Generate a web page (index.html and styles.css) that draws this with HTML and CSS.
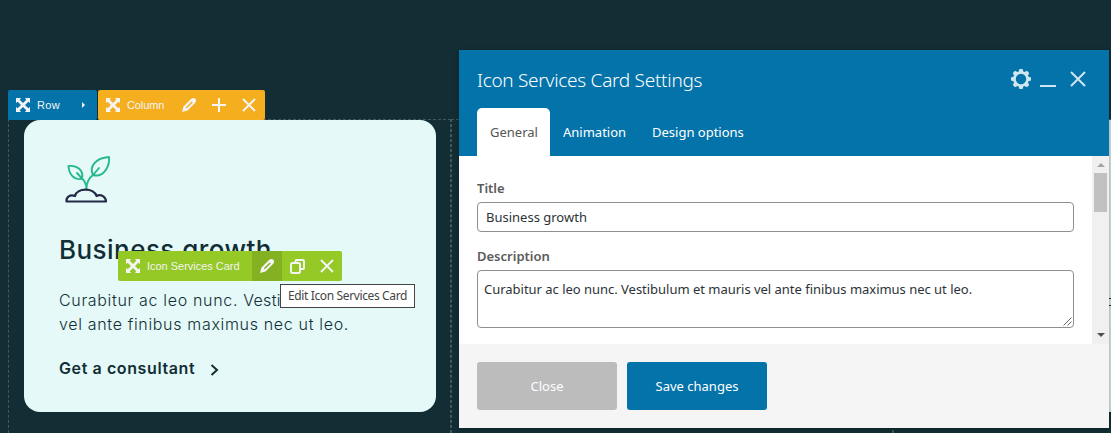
FILE: index.html
```
<!DOCTYPE html>
<html lang="en">
<head>
<meta charset="utf-8">
<title>Icon Services Card Settings</title>
<link rel="stylesheet" href="styles.css">
</head>
<body>
<svg class="sprite" width="0" height="0">
  <symbol id="move" viewBox="0 0 14 14"><path d="M0 0h5L3.700 1.700 7 5l3.300-3.300L9 0h5v5l-1.700-1.300L9 7l3.300 3.300L14 9v5H9l1.300-1.700L7 9l-3.300 3.300L5 14H0V9l1.700 1.300L5 7 1.700 3.700 0 5z"/></symbol>
  <symbol id="pencil" viewBox="0 0 14 14"><path fill-rule="evenodd" d="M0 14l1.500-5.500L9 1q3-2 4.500 0T13 5l-7.500 7.500zM3.800 9.300l1 1L10.700 4.400l-1-1z"/></symbol>
  <symbol id="cross" viewBox="0 0 14 14"><path class="line" d="M1 1l12 12M13 1L1 13"/></symbol>
  <symbol id="plus" viewBox="0 0 14 14"><path class="line" d="M7 0v14M0 7h14"/></symbol>
  <symbol id="copy" viewBox="0 0 15 15"><path class="line" d="M5.500 3V2q0-1 1-1h6.500q1 0 1 1v7q0 1-1 1h-2"/><rect class="line" x="1" y="4" width="9" height="10" rx="1.500"/></symbol>
</svg>

<main class="page">
  <section class="column">
    <article class="card">
      <svg class="plant" viewBox="0 0 48 50">
        <g class="leaf">
          <path d="M23.500 34C23.500 28 25 23.500 30 20M23.500 34C23.500 29 22 26 18.500 23"/>
          <path d="M30 20C26 12 32 3 46 2C47 12 40 23 30 20ZM30 20L36 13"/>
          <path d="M19 23.500C12 26 6 20 5.500 11C14 10 21 15 19 23.500ZM19 23.500L14 18"/>
        </g>
        <path class="soil" d="M3.500 46.500C3 42 7 39 12 41C14 32.500 31 32.500 33.500 41C38 38.500 43 42 43 46.500Z"/>
      </svg>
      <h2>Business growth</h2>
      <p>Curabitur ac leo nunc. <span class="tight">Vestibulum et mauris</span><br>vel ante finibus maximus nec ut leo.</p>
      <a class="more">Get a consultant<svg viewBox="0 0 9 14"><path d="M1.500 2L7 7l-5.500 5"/></svg></a>
    </article>
  </section>
  <section class="column"></section>
  <section class="column last"><article class="card"><i class="mark"></i></article></section>
</main>

<nav class="controls top">
  <div class="group row"><svg><use href="#move"/></svg><span>Row</span><i class="caret"></i></div>
  <div class="group col"><svg><use href="#move"/></svg><span>Column</span><b><svg><use href="#pencil"/></svg></b><b><svg><use href="#plus"/></svg></b><b><svg><use href="#cross"/></svg></b></div>
</nav>
<nav class="controls element">
  <div class="group green"><svg><use href="#move"/></svg><span>Icon Services Card</span><b class="active"><svg><use href="#pencil"/></svg></b><b><svg class="copy"><use href="#copy"/></svg></b><b><svg><use href="#cross"/></svg></b></div>
</nav>
<div class="tooltip">Edit Icon Services Card</div>

<div class="modal">
  <header>
    <div class="bar">
      <h1>Icon Services Card Settings</h1>
      <svg class="gear" viewBox="0 0 20 20"><path fill-rule="evenodd" d="M8.400 0h3.200l.7 2.500 1.200.5L16 1.800 18.200 4 17 6.500l.5 1.200L20 8.400v3.200l-2.500.7-.5 1.200 1.200 2.500-2.200 2.200-2.500-1.200-1.200.5-.7 2.500H8.400l-.7-2.500-1.200-.5L4 18.200 1.800 16 3 13.500l-.5-1.200L0 11.600V8.400l2.500-.7L3 6.500 1.800 4 4 1.800 6.500 3l1.200-.5zM10 4.800a5.200 5.200 0 1 0 0 10.400a5.200 5.200 0 1 0 0-10.400z"/></svg>
      <i class="minimize"></i>
      <svg class="close" viewBox="0 0 16 16"><path d="M1 1l14 14M15 1L1 15"/></svg>
    </div>
    <div class="tabs"><span class="tab current">General</span><span class="tab animation">Animation</span><span class="tab design">Design options</span></div>
  </header>
  <div class="body">
    <div class="fields">
      <label>Title</label>
      <div class="input"><span>Business growth</span></div>
      <label class="second">Description</label>
      <div class="input area"><span>Curabitur ac leo nunc. Vestibulum et mauris vel ante finibus maximus nec ut leo.</span><svg viewBox="0 0 9 9"><path d="M.5 8.500l8-8M4.500 8.500l4-4"/></svg></div>
    </div>
    <div class="scrollbar"><i class="up"></i><i class="thumb"></i><i class="down"></i></div>
  </div>
  <footer><span class="button muted">Close</span><span class="button">Save changes</span></footer>
</div>
</body>
</html>
```
FILE: styles.css
```
* { box-sizing: border-box; }
body { margin: 0; width: 1111px; height: 433px; overflow: hidden; position: relative; background: #122e34; font-family: "Noto Sans", sans-serif; font-size: 13px; }
h1, h2, p { margin: 0; }
.sprite { position: absolute; }

.page { display: grid; grid-template-columns: 443px 442px 218px; height: 433px; padding: 119px 0 0 8px; }
.column { border: 1px dashed #43585c; border-bottom: 0; padding: 0 14px 0 15px; }
.card { height: 292px; border-radius: 16px; background: #e4f9f8; color: #122e34; padding: 35px; display: flex; flex-direction: column; font-family: Inter, sans-serif; }
.last { border-right: 0; padding: 0 0 0 14px; }
.last .card { background: #d3e5e5; border-radius: 16px 0 0 16px; padding: 178px 0 0; align-items: flex-end; }
.mark { width: 2px; height: 8px; border: solid #122e34; border-width: 1px 0; }
.plant { width: 48px; height: 50px; margin-left: 4px; fill: none; stroke-width: 1.900; flex: none; stroke-linejoin: round; stroke-linecap: round; }
.leaf { stroke: #27b891; }
.soil { stroke: #252947; stroke-width: 2.200; }
.card h2 { margin-top: 26px; font: 500 26px/38px Inter, sans-serif; letter-spacing: .45px; white-space: nowrap; }
.card p { margin-top: 19px; font-size: 16px; line-height: 24px; letter-spacing: .67px; white-space: nowrap; font-weight: 300; }
.tight { letter-spacing: .3px; }
.more { display: flex; align-items: center; height: 24px; margin-top: 22px; font-size: 16px; font-weight: 600; letter-spacing: .6px; }
.more svg { width: 9px; height: 14px; margin: 3px 0 0 15px; fill: none; stroke: #122e34; stroke-width: 2; }

.controls { position: absolute; display: flex; gap: 1px; font: 11px/30px "Liberation Sans", sans-serif; color: #f4f4f4; }
.top { left: 8px; top: 90px; }
.element { left: 118px; top: 251px; }
.group { display: flex; align-items: center; height: 30px; padding-left: 8px; border-radius: 2px; background: #0473aa; white-space: nowrap; }
.group svg { width: 14px; height: 14px; flex: none; fill: #f4f4f4; }
.group span { margin-left: 7px; }
.row { width: 89px; }
.row span { letter-spacing: .3px; }
.col { width: 167px; background: #f4ae1e; }
.col span { width: 48px; margin-right: -1px; letter-spacing: -.5px; letter-spacing: -.3px; }
.green { width: 224px; background: #95c926; }
.green span { width: 105px; letter-spacing: -.02px; }
.group .active { margin-left: 0; background: #83b121; }
.group b { width: 30px; height: 30px; display: flex; align-items: center; justify-content: center; flex: none; }
.group .copy { width: 15px; height: 15px; }
.line { fill: none; stroke: #f4f4f4; stroke-width: 2; }
.caret { margin-left: 22px; border-left: 3px solid #f4f4f4; border-top: 3px solid transparent; border-bottom: 3px solid transparent; }
.col span { letter-spacing: -.1px; }
.tooltip { position: absolute; left: 280px; top: 284px; width: 135px; height: 24px; border: 1px solid #444; background: #fff; color: #444; font: 12px/22px "Noto Sans", sans-serif; letter-spacing: -.37px; padding-left: 7px; white-space: nowrap; }

.modal { position: absolute; left: 459px; top: 50px; width: 650px; height: 378px; display: flex; flex-direction: column; background: #fff; box-shadow: 0 1px 5px rgba(0,0,0,.3); }
.modal header { height: 106px; background: #0473aa; color: #fff; padding-left: 18px; }
.bar { height: 58px; display: flex; align-items: center; padding-right: 23px; }
h1 { width: 534px; margin-top: 2px; font: 300 19px/28px "Noto Sans", sans-serif; letter-spacing: -.28px; white-space: nowrap; }
.gear { width: 20px; height: 20px; fill: #cfe5ef; }
.minimize { width: 16px; height: 2px; margin: 13px 0 0 9px; background: #cfe5ef; }
.close { width: 16px; height: 16px; margin-left: 14px; stroke: #cfe5ef; stroke-width: 2; }
.tabs { display: flex; height: 48px; line-height: 48px; }
.tab { white-space: nowrap; }
.current { width: 73px; padding-left: 13px; background: #fff; color: #555; border-radius: 5px 5px 0 0; }
.animation { margin-left: 13px; width: 89px; }
.body { height: 188px; display: flex; }
.fields { width: 633px; padding: 22px 18px 0; display: flex; flex-direction: column; }
label { height: 20px; margin-bottom: 4px; line-height: 20px; font-weight: 600; color: #5b5b5b; }
.second { margin-top: 14px; }
.input { height: 30px; line-height: 28px; border: 1px solid #8c8f94; border-radius: 4px; padding-left: 8px; color: #2c3338; position: relative; white-space: nowrap; }
.area { height: 58px; padding: 4px 0 0 6px; letter-spacing: -.02px; }
.area svg { position: absolute; right: 1px; bottom: 1px; width: 9px; height: 9px; stroke: #444; stroke-width: .8; }
.scrollbar { width: 17px; background: #f0f0f0; display: flex; flex-direction: column; align-items: center; padding: 7px 0; }
.up { border: 4px solid transparent; border-top: 0; border-bottom-color: #a3a3a3; }
.thumb { width: 13px; height: 39px; margin-top: 6px; background: #c1c1c1; }
.down { margin-top: auto; border: 4px solid transparent; border-bottom: 0; border-top-color: #505050; }
.modal footer { height: 84px; display: flex; gap: 10px; padding: 18px; background: #f5f5f5; }
.button { width: 140px; height: 48px; line-height: 48px; text-align: center; border-radius: 3px; background: #0473aa; color: #fff; }
.muted { background: #bcbcbc; }
```
